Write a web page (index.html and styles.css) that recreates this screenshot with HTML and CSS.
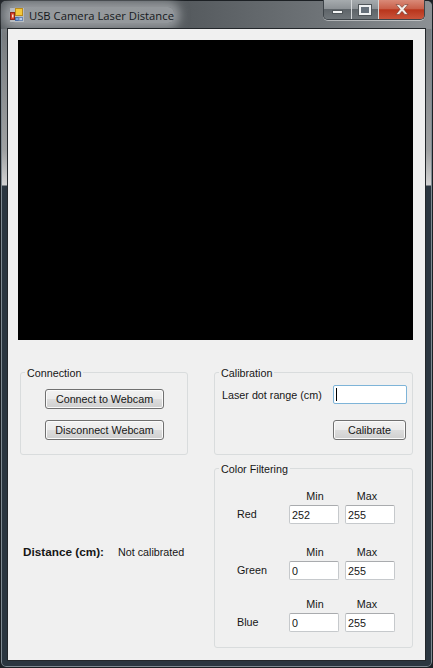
FILE: index.html
```html
<!DOCTYPE html>
<html lang="en">
<head>
    <meta charset="UTF-8">
    <meta name="viewport" content="width=device-width, initial-scale=1.0">
    <title>USB Camera Laser Distance</title>
    <link rel="stylesheet" href="styles.css">
</head>
<body>
<div class="window">
    <header class="titlebar">
        <div class="title">
            <svg class="app-icon" width="16" height="16" viewBox="0 0 16 16">
                <rect x="1" y="1" width="14" height="14" fill="#d9dde2" opacity="0.5"/>
                <rect x="6.5" y="1.5" width="7" height="7" fill="#f5c93c" stroke="#b98a1c"/>
                <rect x="1.5" y="5.5" width="4" height="7" fill="#d8412c" stroke="#8e2a1c"/>
                <rect x="3" y="7.5" width="1.5" height="3" fill="#f6e0d0"/>
                <rect x="6.5" y="10.5" width="3.5" height="3" fill="#7aa3dc" stroke="#4a6ea8"/>
                <rect x="10" y="10.5" width="3.5" height="3" fill="#b9cbe6" stroke="#6d88b2"/>
            </svg>
            <span>USB Camera Laser Distance</span>
        </div>
        <div class="caption">
            <div class="cap-btn cap-min"><span class="min-glyph"></span></div>
            <div class="cap-btn cap-max"><span class="max-glyph"></span></div>
            <div class="cap-btn cap-close">
                <svg width="14" height="11" viewBox="0 0 14 11">
                    <path d="M1 0.5h3.2L7 3.4 9.8 0.5H13L8.9 5.3 13 10.5H9.8L7 7.3 4.2 10.5H1L5.1 5.3z" fill="#f4eeea" stroke="#6e3a30" stroke-width="0.6"/>
                </svg>
            </div>
        </div>
    </header>

    <main class="client">
        <div class="video"></div>

        <div class="panels">
            <div class="left-col">
                <fieldset class="group connection">
                    <legend>Connection</legend>
                    <div class="group-body">
                        <button>Connect to Webcam</button>
                        <button>Disconnect Webcam</button>
                    </div>
                </fieldset>
                <div class="distance">
                    <span class="distance-label">Distance (cm):</span>
                    <span>Not calibrated</span>
                </div>
            </div>

            <div class="right-col">
                <fieldset class="group calibration">
                    <legend>Calibration</legend>
                    <div class="group-body">
                        <div class="range-row">
                            <label>Laser dot range (cm)</label>
                            <input class="focused" type="text">
                        </div>
                        <button class="calibrate">Calibrate</button>
                    </div>
                </fieldset>

                <fieldset class="group filtering">
                    <legend>Color Filtering</legend>
                    <div class="group-body">
                        <div class="channel">
                            <span class="head min">Min</span><span class="head max">Max</span>
                            <label class="name">Red</label>
                            <input type="text" value="252"><input type="text" value="255">
                        </div>
                        <div class="channel tight">
                            <span class="head min">Min</span><span class="head max">Max</span>
                            <label class="name">Green</label>
                            <input type="text" value="0"><input type="text" value="255">
                        </div>
                        <div class="channel last">
                            <span class="head min">Min</span><span class="head max">Max</span>
                            <label class="name">Blue</label>
                            <input type="text" value="0"><input type="text" value="255">
                        </div>
                    </div>
                </fieldset>
            </div>
        </div>
    </main>
</div>
</body>
</html>
```

FILE: styles.css
```css
* {
    box-sizing: border-box;
}

html, body {
    margin: 0;
    height: 100%;
}

body {
    font-family: 'Liberation Sans', Arial, sans-serif;
    font-size: 10.75px;
    color: #161616;
    background: #1d2126;
}

.window {
    width: 433px;
    height: 668px;
    padding: 0 6px 7px;
    display: flex;
    flex-direction: column;
    border: 1px solid #1c2024;
    border-radius: 6px;
    box-shadow: inset 0 0 0 1px #7f8a92;
    background: linear-gradient(to bottom, #6d7276 0, #a0a2a3 150px, #d2d2d2 184px, #2b3640 185px, #2b3640 100%);
}

/* title bar */
.titlebar {
    height: 28px;
    flex: none;
    display: flex;
    justify-content: space-between;
    align-items: flex-start;
    background: linear-gradient(to right, #5b6065 0, #53585c 40%, #6f7478 75%, #8c9094 100%);
    margin-left: -6px;
    margin-right: -6px;
    padding-left: 8px;
    padding-right: 7px;
    border-radius: 5px 5px 0 0;
}

.title {
    display: flex;
    align-items: center;
    gap: 4px;
    height: 16px;
    margin-top: 6px;
    font-family: 'Open Sans', sans-serif;
    font-size: 11.25px;
    color: #15181b;
    background: rgba(190, 194, 196, 0.6);
    box-shadow: 0 0 10px 6px rgba(190, 194, 196, 0.6);
    border-radius: 6px;
}

.caption {
    display: flex;
    height: 20px;
    width: 102px;
    margin-top: -1px;
    border: 1px solid #3d4348;
    border-top: none;
    border-radius: 0 0 5px 5px;
    box-shadow: 0 1px 0 rgba(255, 255, 255, 0.45);
    overflow: hidden;
}

.cap-btn {
    display: flex;
    align-items: center;
    justify-content: center;
    border-right: 1px solid #d3d6d8;
    background: linear-gradient(to bottom, #a6abae 0, #8d9296 45%, #5f656a 50%, #6f7579 100%);
}

.cap-min {
    width: 28px;
    align-items: flex-end;
    padding-bottom: 5px;
}

.cap-max {
    width: 27px;
}

.cap-close {
    flex: 1;
    border-right: none;
    background: linear-gradient(to bottom, #d98a78 0, #c9604a 45%, #b8351c 52%, #c9533a 100%);
}

.min-glyph {
    width: 11px;
    height: 4px;
    background: #f4f5f5;
    border: 1px solid #50565a;
}

.max-glyph {
    width: 12px;
    height: 10px;
    background: #66707a;
    border: 2px solid #eef0f1;
    outline: 1px solid #50565a;
}

/* client area */
.client {
    flex: 1;
    display: flex;
    flex-direction: column;
    margin: 0 1px;
    padding: 11px 12px 0 10px;
    background: #f0f0f0;
    outline: 1px solid #23272b;
}

.video {
    height: 300px;
    flex: none;
    background: #000;
}

.panels {
    display: flex;
    justify-content: space-between;
    margin-top: 25px;
}

.left-col {
    width: 168px;
    margin-left: 2px;
}

.right-col {
    width: 199px;
    display: flex;
    flex-direction: column;
    gap: 6px;
}

.group {
    margin: 0;
    min-width: 0;
    border: 1px solid #d9dcdd;
    border-radius: 3px;
    padding: 0;
}

.group legend {
    padding: 1px 2px 0;
    margin-left: 4px;
    line-height: 14px;
}

button {
    display: block;
    font: inherit;
    color: inherit;
    height: 20px;
    padding: 0;
    border: 1px solid #707070;
    border-radius: 3px;
    background: linear-gradient(to bottom, #f2f2f2 0, #ebebeb 48%, #dddddd 52%, #cfcfcf 100%);
    box-shadow: inset 0 0 0 1px #fbfbfb;
}

input {
    display: block;
    font: inherit;
    color: inherit;
    height: 19px;
    padding: 1px 2px;
    border: 1px solid #c6c9cc;
    border-top-color: #a9abae;
    border-radius: 2px;
    background: #fff;
    min-width: 0;
    width: 100%;
}

.connection {
    height: 90px;
}

.connection .group-body {
    padding: 9px 0 0 24px;
}

.connection button {
    width: 119px;
    margin-bottom: 11px;
}

.distance {
    display: flex;
    align-items: baseline;
    gap: 14px;
    margin: 90px 0 0 3px;
    line-height: 14px;
    white-space: nowrap;
}

.distance-label {
    font-size: 11.75px;
    font-weight: bold;
}

.calibration {
    height: 90px;
}

.calibration .group-body {
    padding: 5px 5px 0 7px;
}

.range-row {
    display: flex;
    justify-content: space-between;
    align-items: center;
}

.range-row input {
    width: 74px;
    border-color: #7eb4d8;
    /* text caret */
    background: linear-gradient(#000, #000) 2px 2px / 1px 13px no-repeat #fff;
}

.calibrate {
    width: 73px;
    margin: 16px 1px 0 auto;
}

.filtering {
    height: 187px;
}

.filtering .group-body {
    padding-top: 13px;
}

.channel {
    display: grid;
    grid-template-columns: 68px 50px 50px;
    column-gap: 6px;
    row-gap: 2px;
    margin-bottom: 21px;
}

.channel.tight {
    margin-bottom: 17px;
}

.channel.last {
    margin-bottom: 0;
}

.head {
    line-height: 14px;
    text-align: center;
}

.head.min {
    grid-column: 2;
    padding-left: 2px;
}

.head.max {
    padding-right: 6px;
}

.name {
    line-height: 19px;
    padding-left: 22px;
}
```
